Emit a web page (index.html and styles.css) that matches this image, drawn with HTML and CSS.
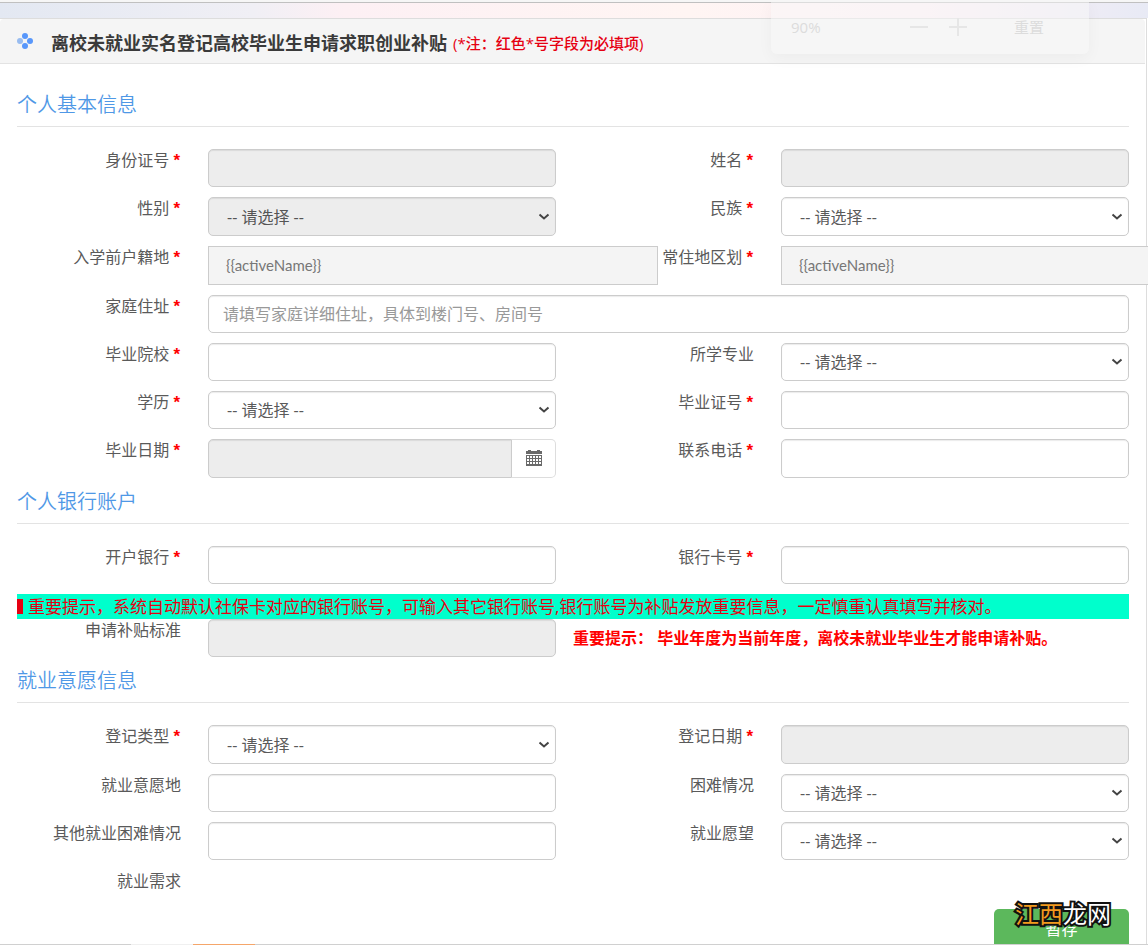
FILE: index.html
```html
<!DOCTYPE html>
<html lang="zh-CN">
<head>
<meta charset="utf-8">
<title>求职创业补贴申请</title>
<link rel="stylesheet" href="styles.css">
</head>
<body>
<div class="window">
  <div class="strip"></div>
  <main class="panel">
    <header class="panel-head">
      <svg class="clover" viewBox="0 0 16 16" aria-hidden="true">
        <circle cx="8" cy="3" r="3" fill="#5897fb"/>
        <circle cx="3" cy="8" r="3" fill="#98bcf0"/>
        <circle cx="13" cy="8" r="3" fill="#5897fb"/>
        <circle cx="8" cy="13" r="3" fill="#5897fb"/>
      </svg>
      <h1>离校未就业实名登记高校毕业生申请求职创业补贴</h1>
      <span class="head-note">(*注：红色*号字段为必填项)</span>
    </header>
    <form class="form">
      <h2>个人基本信息</h2>
      <div class="row">
        <label class="req" for="idno">身份证号</label><input id="idno" disabled>
        <label class="req" for="name">姓名</label><input id="name" disabled>
      </div>
      <div class="row tall">
        <label class="req" for="sex">性别</label><select id="sex" disabled><option>-- 请选择 --</option></select>
        <label class="req" for="nation">民族</label><select id="nation"><option>-- 请选择 --</option></select>
      </div>
      <div class="row tall">
        <label class="req" for="origin">入学前户籍地</label><button id="origin" class="area" type="button">{{activeName}}</button>
        <label class="req" for="reside">常住地区划</label><button id="reside" class="area" type="button">{{activeName}}</button>
      </div>
      <div class="row">
        <label class="req" for="addr">家庭住址</label><input id="addr" class="wide" placeholder="请填写家庭详细住址，具体到楼门号、房间号">
      </div>
      <div class="row">
        <label class="req" for="school">毕业院校</label><input id="school">
        <label for="major">所学专业</label><select id="major"><option>-- 请选择 --</option></select>
      </div>
      <div class="row">
        <label class="req" for="degree">学历</label><select id="degree"><option>-- 请选择 --</option></select>
        <label class="req" for="cert">毕业证号</label><input id="cert">
      </div>
      <div class="row tall">
        <label class="req" for="gdate">毕业日期</label>
        <div class="date">
          <input id="gdate" disabled>
          <button type="button" aria-label="选择日期">
            <svg viewBox="0 0 16 16" aria-hidden="true">
              <path d="M0 1h2V0h3v1h6V0h3v1h2v15H0z" fill="#6a6a6a"/>
              <path d="M0 4.500h16" stroke="#fff"/>
              <path d="M1 7h14M1 10h14M1 13h14" stroke="#fff" stroke-width="2" stroke-dasharray="2 1"/>
            </svg>
          </button>
        </div>
        <label class="req" for="phone">联系电话</label><input id="phone">
      </div>

      <h2>个人银行账户</h2>
      <div class="row">
        <label class="req" for="bank">开户银行</label><input id="bank">
        <label class="req" for="card">银行卡号</label><input id="card">
      </div>
      <p class="banner">重要提示，系统自动默认社保卡对应的银行账号，可输入其它银行账号,银行账号为补贴发放重要信息，一定慎重认真填写并核对。</p>
      <div class="row">
        <label for="standard">申请补贴标准</label><input id="standard" disabled>
        <strong class="warning">重要提示： 毕业年度为当前年度，离校未就业毕业生才能申请补贴。</strong>
      </div>

      <h2>就业意愿信息</h2>
      <div class="row tall">
        <label class="req" for="rtype">登记类型</label><select id="rtype"><option>-- 请选择 --</option></select>
        <label class="req" for="rdate">登记日期</label><input id="rdate" disabled>
      </div>
      <div class="row">
        <label for="place">就业意愿地</label><input id="place">
        <label for="hard">困难情况</label><select id="hard"><option>-- 请选择 --</option></select>
      </div>
      <div class="row">
        <label for="other">其他就业困难情况</label><input id="other">
        <label for="wish">就业愿望</label><select id="wish"><option>-- 请选择 --</option></select>
      </div>
      <div class="row short">
        <span class="label">就业需求</span>
      </div>
      <div class="actions"><button class="save" type="button">暂存</button></div>
    </form>
  </main>
  <aside class="zoom-pop"><span>90%</span><i class="minus"></i><i class="plus"></i><span class="reset">重置</span></aside>
  <div class="watermark"><span>江西</span>龙网</div>
  <div class="taskbar"><i class="light"></i><i class="active"></i></div>
</div>
</body>
</html>
```
FILE: styles.css
```css
* { box-sizing: border-box; }
body {
  margin: 0;
  color: #5a5a5a;
  font: 16px/24px "Open Sans", "Noto Sans CJK SC", sans-serif;
  background: #fff;
}
input, select, button { font: inherit; color: inherit; }

.window {
  position: relative;
  height: 100vh;
  overflow: hidden;
  border-top: 2px solid #f6f6f6;
}
.strip {
  height: 16px;
  border-top: 1px solid #c0c0c0;
  background: linear-gradient(90deg, #e3e8f2, #f0eff5 22%, #fdf0f4 30%, #fff5f3 60%, #fdf0f5 80%, #e8eaf5);
}
.panel {
  margin-right: 1px;
  min-height: 100%;
  border: solid #ddd;
  border-width: 1px 1px 0 0;
  background: #fff;
}
.panel-head {
  display: flex;
  align-items: center;
  height: 45px;
  padding: 3px 17px 0;
  margin-right: 1px;
  border-bottom: 1px solid #e3e3e3;
  border-radius: 4px 4px 0 0;
  background: #f5f5f5;
}
.clover { width: 16px; height: 16px; margin: 0 18px 4px 0; }
h1 { margin: 0 6px 0 0; font-size: 18px; font-weight: 700; color: #3a3a3a; }
.head-note { font-size: 15px; font-weight: 500; color: #e60012; }

.form { padding: 25px 17px 0; }
h2 {
  margin: 0 0 22px;
  padding-bottom: 5px;
  border-bottom: 1px solid #e3e3e3;
  font-size: 20px;
  font-weight: 350;
  line-height: 32px;
  color: #4f98e6;
}
.row + h2 { margin-top: -2px; }

.row {
  display: grid;
  grid-template-columns: minmax(0, 164fr) minmax(0, 348fr) minmax(0, 171fr) minmax(0, 348fr);
  column-gap: 27px;
  height: 38px;
  margin-bottom: 10px;
}
.row.tall { height: 39px; }
.row.short { height: 29px; }
label, .label { line-height: 22px; text-align: right; white-space: nowrap; }
.req::after {
  content: "*";
  margin: 0 1px 0 4px;
  font-family: "Liberation Sans", sans-serif;
  font-size: 17px;
  font-weight: 700;
  line-height: 1;
  color: #f00;
}

input, select {
  width: 100%;
  height: 100%;
  min-width: 0;
  padding: 4px 14px;
  border: 1px solid #ccc;
  border-radius: 5px;
  background: #fff;
  box-shadow: inset 0 1px 1px rgba(0, 0, 0, 0.08);
  opacity: 1;
}
input:disabled, select:disabled { background-color: #ededed; color: #555; }
input::placeholder { color: #999; }
select {
  appearance: none;
  padding: 4px 18px;
  background: #fff url("data:image/svg+xml,%3Csvg xmlns='http://www.w3.org/2000/svg' width='12' height='8'%3E%3Cpath d='M1.500 1.500L6 5.500L10.500 1.500' fill='none' stroke='%23444' stroke-width='2'/%3E%3C/svg%3E") right 5px center no-repeat;
}
.wide { grid-column: 2 / -1; }
.area {
  width: 450px;
  padding: 0 17px 2px;
  border: 1px solid #ccc;
  background: #f4f4f4;
  font-family: Lato, sans-serif;
  font-size: 15px;
  color: #777;
  text-align: left;
}
.date { display: flex; }
.date input { flex: 1; border-radius: 5px 0 0 5px; }
.date button {
  width: 44px;
  padding: 0 0 4px;
  border: 1px solid #ddd;
  border-left: 0;
  border-radius: 0 5px 5px 0;
  background: #fff;
}
.date svg { width: 16px; height: 16px; vertical-align: middle; }

.banner {
  margin: 0;
  padding-left: 11px;
  background: linear-gradient(#e60012, #e60012) 0 5px / 6px 15px no-repeat #0fc;
  font-size: 17px;
  line-height: 25px;
  color: #e60012;
  white-space: nowrap;
}
.warning {
  grid-column: 3 / -1;
  margin-left: -10px;
  line-height: 38px;
  color: #f00;
  white-space: nowrap;
}
.actions { display: flex; justify-content: flex-end; }
.save {
  width: 135px;
  height: 40px;
  border: 0;
  border-radius: 5px;
  background: #5cb85c;
  color: #fff;
}

.zoom-pop {
  position: absolute;
  top: -2px;
  right: 59px;
  display: flex;
  align-items: center;
  width: 318px;
  height: 54px;
  padding: 0 45px 0 20px;
  border-radius: 0 0 6px 6px;
  background: rgba(248, 248, 248, 0.5);
  box-shadow: 0 4px 16px rgba(0, 0, 0, 0.04);
  font-size: 15px;
  color: #dcdcdc;
}
.minus, .plus { width: 18px; height: 18px; background: linear-gradient(#e6e6e6, #e6e6e6) center / 18px 2px no-repeat; }
.minus { margin-left: auto; }
.plus {
  margin: 0 47px 0 21px;
  background: linear-gradient(#e6e6e6, #e6e6e6) center / 18px 2px no-repeat, linear-gradient(#e6e6e6, #e6e6e6) center / 2px 18px no-repeat;
}
.watermark {
  position: absolute;
  right: 37px;
  bottom: 16px;
  font-size: 24px;
  line-height: 30px;
  color: #fff;
  -webkit-text-stroke: 4px #111;
  paint-order: stroke fill;
}
.watermark span { color: #f39a1e; }
.taskbar {
  position: absolute;
  right: 0;
  bottom: 0;
  left: 0;
  display: flex;
  height: 1px;
  padding-left: 131px;
  background: #d0d0d0;
}
.taskbar i { width: 62px; }
.light { background: #f0f0f0; }
.active { background: #f5a66a; }
```
